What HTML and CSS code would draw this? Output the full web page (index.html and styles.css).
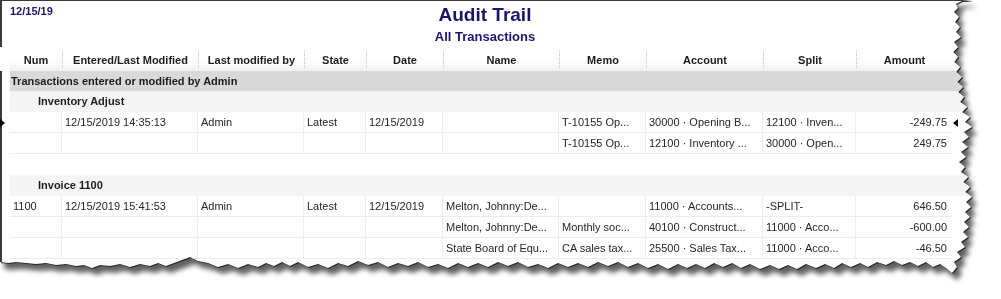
FILE: index.html
```html
<!DOCTYPE html>
<html>
<head>
<meta charset="utf-8">
<link rel="stylesheet" href="styles.css">
</head>
<body>
<div class="sheet">
  <div class="paper">
    <div class="report-head">
      <div class="date">12/15/19</div>
      <div class="titles">
        <div class="title">Audit Trail</div>
        <div class="subtitle">All Transactions</div>
      </div>
      <div></div>
    </div>

    <div class="row head-row">
      <div></div>
      <div class="hc first">Num</div>
      <div class="hc">Entered/Last Modified</div>
      <div class="hc">Last modified by</div>
      <div class="hc">State</div>
      <div class="hc">Date</div>
      <div class="hc">Name</div>
      <div class="hc">Memo</div>
      <div class="hc">Account</div>
      <div class="hc">Split</div>
      <div class="hc">Amount</div>
      <div></div>
    </div>

    <div class="row band-row">
      <div></div>
      <div class="band">Transactions entered or modified by Admin</div>
    </div>

    <div class="row group-row">
      <div></div>
      <div class="group">Inventory Adjust</div>
    </div>

    <div class="row data-row">
      <div class="gutter"><span class="mark-right"></span></div>
      <div class="c"></div>
      <div class="c">12/15/2019 14:35:13</div>
      <div class="c">Admin</div>
      <div class="c">Latest</div>
      <div class="c">12/15/2019</div>
      <div class="c"></div>
      <div class="c">T-10155 Op...</div>
      <div class="c">30000 · Opening B...</div>
      <div class="c">12100 · Inven...</div>
      <div class="c num">-249.75</div>
      <div class="gutter"><span class="mark-left"></span></div>
    </div>

    <div class="row data-row">
      <div></div>
      <div class="c"></div>
      <div class="c"></div>
      <div class="c"></div>
      <div class="c"></div>
      <div class="c"></div>
      <div class="c"></div>
      <div class="c">T-10155 Op...</div>
      <div class="c">12100 · Inventory ...</div>
      <div class="c">30000 · Open...</div>
      <div class="c num">249.75</div>
      <div></div>
    </div>

    <div class="row blank-row"></div>

    <div class="row group-row">
      <div></div>
      <div class="group">Invoice 1100</div>
    </div>

    <div class="row data-row">
      <div></div>
      <div class="c">1100</div>
      <div class="c">12/15/2019 15:41:53</div>
      <div class="c">Admin</div>
      <div class="c">Latest</div>
      <div class="c">12/15/2019</div>
      <div class="c">Melton, Johnny:De...</div>
      <div class="c"></div>
      <div class="c">11000 · Accounts...</div>
      <div class="c">-SPLIT-</div>
      <div class="c num">646.50</div>
      <div></div>
    </div>

    <div class="row data-row">
      <div></div>
      <div class="c"></div>
      <div class="c"></div>
      <div class="c"></div>
      <div class="c"></div>
      <div class="c"></div>
      <div class="c">Melton, Johnny:De...</div>
      <div class="c">Monthly soc...</div>
      <div class="c">40100 · Construct...</div>
      <div class="c">11000 · Acco...</div>
      <div class="c num">-600.00</div>
      <div></div>
    </div>

    <div class="row data-row">
      <div></div>
      <div class="c"></div>
      <div class="c"></div>
      <div class="c"></div>
      <div class="c"></div>
      <div class="c"></div>
      <div class="c">State Board of Equ...</div>
      <div class="c">CA sales tax...</div>
      <div class="c">25500 · Sales Tax...</div>
      <div class="c">11000 · Acco...</div>
      <div class="c num">-46.50</div>
      <div></div>
    </div>
  </div>
</div>
</body>
</html>
```

FILE: styles.css
```css
html, body {
  margin: 0;
  padding: 0;
  background: #fff;
}

body {
  width: 1001px;
  height: 299px;
  overflow: hidden;
  font-family: "Liberation Sans", Arial, sans-serif;
  font-size: 11px;
  color: #262626;
}

.sheet {
  width: 995px;
  height: 295px;
  filter: drop-shadow(1px 1px 0 #2a2a2a) drop-shadow(4px 6px 2.5px rgba(0, 0, 0, 0.62));
}

.paper {
  width: 980px;
  height: 280px;
  background: #fff;
  box-shadow: inset 2px 0 0 #3a3a3a, inset 0 1px 0 #3a3a3a;
  clip-path: polygon(
    0 0, 972px 0, 962px 1px, 956px 4px, 958px 8px, 954px 12px, 959px 17px, 955px 22px, 960px 27px,
    956px 32px, 961px 37px, 954px 42px, 958px 47px, 953px 52px, 958px 57px, 954px 62px, 960px 67px,
    956px 72px, 962px 77px, 957px 82px, 963px 87px, 958px 92px, 964px 97px, 960px 102px, 967px 107px,
    962px 112px, 970px 117px, 965px 122px, 972px 127px, 964px 132px, 969px 137px, 962px 142px,
    968px 147px, 961px 152px, 966px 157px, 959px 162px, 965px 167px, 961px 172px, 968px 177px,
    963px 182px, 970px 187px, 965px 192px, 972px 197px, 966px 202px, 971px 207px, 965px 212px,
    970px 217px, 964px 222px, 969px 227px, 963px 232px, 968px 237px, 961px 242px, 965px 247px,
    957px 252px, 961px 257px, 954px 262px, 957px 267px, 952px 273px,
    946px 268px, 940px 264px, 933px 267px, 926px 262px, 918px 266px, 910px 262px, 902px 265px,
    894px 261px, 886px 265px, 877px 262px, 868px 267px, 860px 263px, 851px 267px, 842px 263px,
    834px 268px, 825px 264px, 816px 268px, 806px 264px, 797px 269px, 788px 265px, 779px 269px,
    770px 265px, 760px 269px, 750px 264px, 741px 268px, 732px 263px, 723px 267px, 714px 263px,
    705px 268px, 696px 264px, 687px 268px, 678px 264px, 668px 269px, 658px 264px, 648px 268px,
    638px 263px, 628px 267px, 618px 262px, 608px 266px, 598px 262px, 588px 267px, 578px 263px,
    568px 267px, 558px 263px, 548px 268px, 538px 264px, 528px 267px, 518px 262px, 508px 266px,
    498px 262px, 488px 267px, 478px 263px, 468px 267px, 458px 263px, 448px 268px, 438px 264px,
    428px 267px, 418px 262px, 408px 266px, 398px 263px, 388px 267px, 378px 262px, 368px 265px,
    358px 261px, 348px 266px, 338px 263px, 328px 268px, 318px 264px, 308px 267px, 298px 262px,
    290px 266px, 282px 262px, 274px 266px, 266px 263px, 258px 267px, 248px 264px, 238px 268px,
    228px 264px, 218px 267px, 208px 263px, 198px 261px, 190px 257px, 182px 260px, 174px 263px,
    166px 266px, 158px 263px, 150px 266px, 140px 264px, 130px 267px, 120px 264px, 110px 266px,
    100px 265px, 92px 268px, 84px 265px, 76px 266px, 66px 264px, 56px 265px, 46px 263px,
    36px 264px, 26px 263px, 16px 262px, 8px 263px, 0 262px
  );
}

/* report title block */
.report-head {
  display: grid;
  grid-template-columns: 1fr auto 1fr;
  height: 47px;
  padding-right: 10px;
}

.date {
  padding: 5px 0 0 10px;
  font-weight: bold;
  font-size: 11px;
  line-height: 12px;
  color: #1b1769;
}

.titles {
  text-align: center;
  padding-top: 3px;
  color: #18166b;
  font-weight: bold;
}

.title {
  font-size: 19px;
  line-height: 24px;
}

.subtitle {
  font-size: 13px;
  line-height: 16px;
  margin-top: 2px;
}

/* table rows */
.row {
  display: grid;
  grid-template-columns: 10px 52px 136px 106px 62px 77px 116px 87px 117px 93px 96px 1fr;
}

.head-row {
  height: 24px;
  background: linear-gradient(to bottom, #fff 0%, #fff 55%, #f1f1f1 100%);
}

.head-row > div:first-child {
  background: #fff;
}

.hc {
  display: flex;
  align-items: center;
  justify-content: center;
  font-weight: bold;
  color: #1c1c1c;
  margin: 4px 0 3px;
  border-left: 1px dotted #c2c2c2;
  white-space: nowrap;
}

.hc.first {
  border-left: none;
}

.band-row {
  height: 20px;
}

.band {
  grid-column: 2 / -1;
  background: #d9d9d9;
  font-weight: bold;
  color: #1c1c1c;
  line-height: 20px;
  padding-left: 1px;
}

.group-row {
  height: 21px;
}

.group {
  grid-column: 2 / -1;
  background: #f4f4f4;
  font-weight: bold;
  color: #1c1c1c;
  line-height: 21px;
  padding-left: 28px;
}

.blank-row {
  height: 21px;
}

.data-row {
  height: 21px;
}

.c {
  box-sizing: border-box;
  height: 21px;
  line-height: 21px;
  padding-left: 3px;
  white-space: nowrap;
  overflow: hidden;
  border-right: 1px solid #ececec;
  border-bottom: 1px solid #ececec;
}

.c.num {
  text-align: right;
  padding-right: 5px;
  border-right: none;
}

.gutter {
  display: flex;
  align-items: center;
}

.mark-right {
  width: 0;
  height: 0;
  border-top: 4px solid transparent;
  border-bottom: 4px solid transparent;
  border-left: 5px solid #000;
}

.mark-left {
  width: 0;
  height: 0;
  margin-left: 1px;
  border-top: 4px solid transparent;
  border-bottom: 4px solid transparent;
  border-right: 5px solid #000;
}
```
